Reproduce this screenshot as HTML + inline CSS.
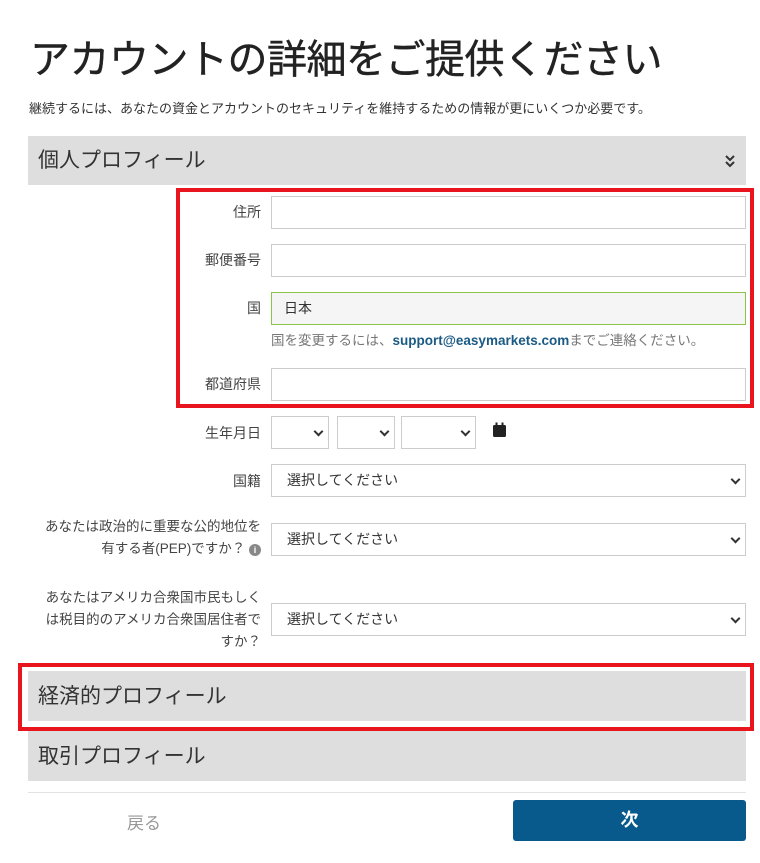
<!DOCTYPE html>
<html><head><meta charset="utf-8"><style>
*{box-sizing:border-box;margin:0;padding:0}
body{width:760px;height:863px;background:#fff;font-family:"Liberation Sans","Noto Sans CJK JP",sans-serif;color:#333;position:relative;overflow:hidden}
.a{position:absolute}
.bar{position:absolute;left:28px;width:718px;background:#dedede;font-size:21px;color:#333;padding-left:10px}
.inp{position:absolute;left:271px;width:475px;height:33px;border:1px solid #ccc;background:#fff}
.lbl{position:absolute;right:499px;font-size:14px;color:#444;text-align:right;line-height:22px}
.sel{position:absolute;height:33px;border:1px solid #ccc;background:#fff;font-size:14px;color:#333;padding-left:15px;line-height:31px}
.chev{position:absolute;right:6px;top:11px;width:7px;height:7px;border-right:2px solid #333;border-bottom:2px solid #333;transform:rotate(45deg)}
.red{position:absolute;border:4px solid #e8141e}
</style></head><body>
<div class="a" style="left:30px;top:27px;font-size:40px;color:#222;letter-spacing:-0.5px;-webkit-text-stroke:0.4px #222">アカウントの詳細をご提供ください</div>
<div class="a" style="left:29px;top:98px;font-size:13px;color:#333">継続するには、あなたの資金とアカウントのセキュリティを維持するための情報が更にいくつか必要です。</div>
<div class="bar" style="top:136px;height:49px;line-height:49px">個人プロフィール<span style="position:absolute;right:10px;top:0;font-size:14px">
<svg width="12" height="14" viewBox="0 0 12 14" style="vertical-align:middle"><path d="M2 2l4 4 4-4M2 8l4 4 4-4" stroke="#333" stroke-width="2" fill="none"/></svg></span></div>
<div class="red" style="left:176px;top:188px;width:578px;height:220px"></div>
<div class="lbl" style="top:201px">住所</div><div class="inp" style="top:196px"></div>
<div class="lbl" style="top:249px">郵便番号</div><div class="inp" style="top:244px"></div>
<div class="lbl" style="top:297px">国</div><div class="inp" style="top:292px;background:#f5f5f5;border-color:#8bc34a;font-size:14px;padding-left:12px;line-height:31px">日本</div>
<div class="a" style="left:271px;top:329px;font-size:13.5px;color:#777">国を変更するには、<b style="color:#1a5a85">support@easymarkets.com</b>までご連絡ください。</div>
<div class="lbl" style="top:373px">都道府県</div><div class="inp" style="top:368px"></div>
<div class="lbl" style="top:422px">生年月日</div>
<div class="sel" style="left:271px;top:416px;width:58px"><span class="chev"></span></div>
<div class="sel" style="left:337px;top:416px;width:58px"><span class="chev"></span></div>
<div class="sel" style="left:401px;top:416px;width:75px"><span class="chev"></span></div>
<svg class="a" style="left:493px;top:422px" width="13" height="15" viewBox="0 0 13 15"><rect x="0" y="3" width="13" height="12" rx="1.5" fill="#222"/><rect x="2.5" y="0.5" width="2" height="4" fill="#222"/><rect x="8.5" y="0.5" width="2" height="4" fill="#222"/></svg>
<div class="lbl" style="top:470px">国籍</div>
<div class="sel" style="left:271px;top:464px;width:475px">選択してください<span class="chev"></span></div>
<div class="lbl" style="top:516px;font-size:13.5px">あなたは政治的に重要な公的地位を<br>有する者(PEP)ですか？ <span style="display:inline-block;width:12px;height:12px;border-radius:50%;background:#888;color:#fff;font-size:9px;line-height:12px;text-align:center;font-weight:bold">i</span></div>
<div class="sel" style="left:271px;top:523px;width:475px">選択してください<span class="chev"></span></div>
<div class="lbl" style="top:587px;width:236px;font-size:13.5px">あなたはアメリカ合衆国市民もしく<br>は税目的のアメリカ合衆国居住者で<br>すか？</div>
<div class="sel" style="left:271px;top:603px;width:475px">選択してください<span class="chev"></span></div>
<div class="red" style="left:18px;top:663px;width:736px;height:68px"></div>
<div class="bar" style="top:671px;height:50px;line-height:52px">経済的プロフィール</div>
<div class="bar" style="top:731px;height:50px;line-height:52px">取引プロフィール</div>
<div class="a" style="left:28px;top:792px;width:718px;height:1px;background:#e3e3e3"></div>
<div class="a" style="left:127px;top:809px;font-size:17px;color:#999">戻る</div>
<div class="a" style="left:513px;top:800px;width:233px;height:41px;background:#085a8c;border-radius:3px;color:#fff;font-size:18px;text-align:center;line-height:41px;font-weight:bold">次</div>
</body></html>
